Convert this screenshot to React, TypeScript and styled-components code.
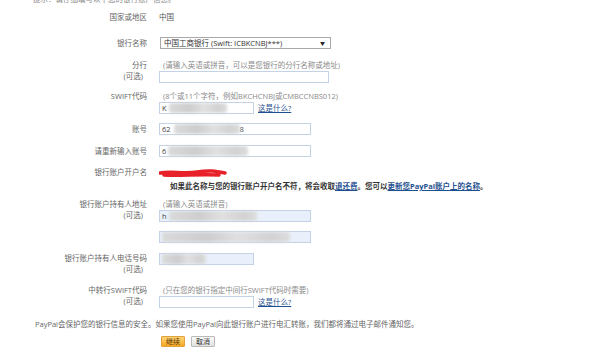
import styled, { createGlobalStyle } from "styled-components";

const GlobalStyle = createGlobalStyle`
  html, body {
    margin: 0;
    background: #fff;
  }

  body {
    font-family: "Open Sans", "Noto Sans CJK SC", sans-serif;
    font-size: 7.5px;
    color: #666;
  }
`

const Page = styled.div`
  width: 600px;
  height: 363px;
  overflow: hidden;
`

const Intro = styled.p`
  margin: -6px 0 0 33px;
  line-height: 11px;
  color: #888;
`

const Row = styled.div<{ $gap: number }>`
  display: grid;
  grid-template-columns: 147px 1fr;
  column-gap: 12px;
  align-items: start;
  margin-top: ${p => p.$gap}px;
`

const LabelCell = styled.div<{ $tall?: boolean }>`
  text-align: right;
  line-height: ${p => (p.$tall ? 12 : 11)}px;
  color: #666;
  white-space: nowrap;
`

const Optional = styled.span`
  display: block;
  line-height: 10px;
  padding-right: 4px;
`

const ValueCell = styled.div`
  display: flex;
  flex-direction: column;
  align-items: flex-start;
  line-height: 11px;
`

const Plain = styled.span`
  color: #555;
  line-height: 11px;
`

const Hint = styled.span`
  color: #8a8a8a;
  padding-left: 4px;
  line-height: 11px;
  white-space: nowrap;
`

const Select = styled.div`
  box-sizing: border-box;
  width: 171px;
  height: 12px;
  margin-left: 1px;
  border: 1px solid #a9a9a9;
  background: #fff;
  display: flex;
  align-items: center;
  justify-content: space-between;
  padding: 0 5px 0 3px;
  color: #333;

  .arrow {
    font-size: 5px;
    color: #222;
  }
`

const InputLine = styled.div`
  display: flex;
  align-items: center;
  gap: 4px;
`

const Field = styled.div<{ $width: number; $filled?: boolean }>`
  box-sizing: border-box;
  width: ${p => p.$width}px;
  height: 12px;
  border: 1px solid #c3d2e5;
  background: ${p => (p.$filled ? "#e9f0fb" : "#fff")};
  display: flex;
  align-items: center;
  padding-left: 2px;
  color: #444;
  white-space: nowrap;
`

const Smudge = styled.span<{ $width: number; $shift?: number }>`
  display: inline-block;
  width: ${p => p.$width}px;
  height: 10px;
  margin-left: ${p => p.$shift ?? 1}px;
  background: linear-gradient(90deg, #dadada, #cdcdcd 35%, #e0e0e0 60%, #d2d2d2 85%, #dcdcdc);
  filter: blur(1.8px);
  border-radius: 3px;
`

const SecondField = styled(Field)`
  margin-top: 9px;
`

const Link = styled.a`
  color: #1f4f8f;
  text-decoration: underline;
  cursor: pointer;
`

const Note = styled.p`
  margin: 3px 0 0 170px;
  line-height: 11px;
  font-weight: 700;
  color: #333;
  white-space: nowrap;
`

const Footer = styled.p`
  margin: 11px 0 0 35px;
  line-height: 11px;
  color: #666;
  white-space: nowrap;
`

const Actions = styled.div`
  display: flex;
  gap: 6px;
  margin: 6px 0 0 161px;
`

const Button = styled.button<{ $primary?: boolean }>`
  box-sizing: border-box;
  height: 11px;
  padding: 0 4px;
  font: inherit;
  font-size: 7px;
  line-height: 9px;
  color: ${p => (p.$primary ? "#5a3300" : "#333")};
  border: 1px solid ${p => (p.$primary ? "#e2a13a" : "#b9b9b9")};
  background: ${p => (p.$primary
    ? "linear-gradient(#ffd67a, #f7a823)"
    : "linear-gradient(#fafafa, #e2e2e2)")};
  border-radius: 1px;
  min-width: ${p => (p.$primary ? 23 : 22)}px;
`

function Scribble() {
    return (
        <svg width="70" height="11" viewBox="0 0 70 11">
            <path d="M1 6 C 12 4, 25 7, 38 5 S 56 4, 66 6 M5 8 C 20 9, 40 7, 60 8"
                  stroke="#e8202a" strokeWidth="3.5" fill="none" strokeLinecap="round"/>
        </svg>
    )
}

export default function App() {
    return (
        <Page>
            <GlobalStyle/>
            <Intro>提示：请仔细填写以下您的银行账户信息。</Intro>

            <Row $gap={7}>
                <LabelCell>国家或地区</LabelCell>
                <ValueCell><Plain>中国</Plain></ValueCell>
            </Row>

            <Row $gap={14}>
                <LabelCell $tall>银行名称</LabelCell>
                <ValueCell>
                    <Select>
                        <span>中国工商银行 (Swift: ICBKCNBJ***)</span>
                        <span className="arrow">▼</span>
                    </Select>
                </ValueCell>
            </Row>

            <Row $gap={11}>
                <LabelCell>分行<Optional>(可选)</Optional></LabelCell>
                <ValueCell>
                    <Hint>(请输入英语或拼音，可以是您银行的分行名称或地址)</Hint>
                    <Field $width={170}/>
                </ValueCell>
            </Row>

            <Row $gap={8}>
                <LabelCell>SWIFT代码</LabelCell>
                <ValueCell>
                    <Hint>(8个或11个字符，例如BKCHCNBJ或CMBCCNBS012)</Hint>
                    <InputLine>
                        <Field $width={95}>K<Smudge $width={58} $shift={2}/></Field>
                        <Link>这是什么?</Link>
                    </InputLine>
                </ValueCell>
            </Row>

            <Row $gap={9}>
                <LabelCell $tall>账号</LabelCell>
                <ValueCell>
                    <Field $width={152}>62<Smudge $width={66} $shift={3}/>8</Field>
                </ValueCell>
            </Row>

            <Row $gap={10}>
                <LabelCell $tall>请重新输入账号</LabelCell>
                <ValueCell>
                    <Field $width={152}>6<Smudge $width={80} $shift={2}/></Field>
                </ValueCell>
            </Row>

            <Row $gap={10}>
                <LabelCell>银行账户开户名</LabelCell>
                <ValueCell><Scribble/></ValueCell>
            </Row>

            <Note>
                如果此名称与您的银行账户开户名不符，将会收取<Link>退还费</Link>。您可以<Link>更新您PayPal账户上的名称</Link>。
            </Note>

            <Row $gap={7}>
                <LabelCell>银行账户持有人地址<Optional>(可选)</Optional></LabelCell>
                <ValueCell>
                    <Hint>(请输入英语或拼音)</Hint>
                    <Field $width={152} $filled>h<Smudge $width={88} $shift={2}/></Field>
                    <SecondField $width={152} $filled><Smudge $width={128} $shift={0}/></SecondField>
                </ValueCell>
            </Row>

            <Row $gap={10}>
                <LabelCell>银行账户持有人电话号码<Optional>(可选)</Optional></LabelCell>
                <ValueCell>
                    <Field $width={95} $filled><Smudge $width={44} $shift={0}/></Field>
                </ValueCell>
            </Row>

            <Row $gap={11}>
                <LabelCell>中转行SWIFT代码<Optional>(可选)</Optional></LabelCell>
                <ValueCell>
                    <Hint>(只在您的银行指定中间行SWIFT代码时需要)</Hint>
                    <InputLine>
                        <Field $width={95}/>
                        <Link>这是什么?</Link>
                    </InputLine>
                </ValueCell>
            </Row>

            <Footer>
                PayPal会保护您的银行信息的安全。如果您使用PayPal向此银行账户进行电汇转账，我们都将通过电子邮件通知您。
            </Footer>

            <Actions>
                <Button $primary>继续</Button>
                <Button>取消</Button>
            </Actions>
        </Page>
    )
}
